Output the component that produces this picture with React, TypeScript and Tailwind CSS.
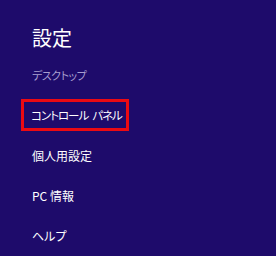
import React from 'react';

const items = ['個人用設定', 'PC 情報', 'ヘルプ'];

export default function App() {
  return (
    <div
      className="w-[276px] h-[256px] bg-[#1e0b6b] pl-8 pt-[26px] flex flex-col text-white overflow-hidden [font-feature-settings:'palt']"
      style={{ fontFamily: '"Noto Sans CJK JP", "Noto Sans", sans-serif' }}
    >
      <h1 className="text-[20px] leading-[24px] font-normal">設定</h1>
      <div className="mt-[18px] text-[11px] leading-[14px] text-[#a89ecf] whitespace-nowrap tracking-[-0.5px]">デスクトップ</div>
      <div className="mt-[17px] -ml-[11px] w-[108px] h-[33px] border-[3px] border-[#ec0a12] flex items-center pl-[7px] text-[11.5px] leading-[16px] whitespace-nowrap tracking-[-1px]">
        <span>コントロール</span>
        <span className="ml-[4px]">パネル</span>
      </div>
      <div className="flex flex-col">
        {items.map(item => (
          <div key={item} className="h-[40px] flex items-center text-[12px] leading-[16px] whitespace-nowrap first:mt-[5px]">
            {item}
          </div>
        ))}
      </div>
    </div>
  );
}
